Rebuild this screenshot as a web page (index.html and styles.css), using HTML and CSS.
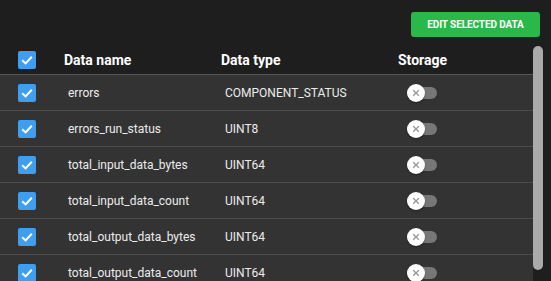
FILE: index.html
```html
<!DOCTYPE html>
<html>
<head>
<meta charset="utf-8">
<link rel="stylesheet" href="styles.css">
</head>
<body>
<div class="app">
  <div class="toolbar"><button class="btn">EDIT SELECTED DATA</button></div>
  <div class="scroller">
    <div class="table">
      <div class="row head">
        <div class="c-check"><span class="cb"><svg viewBox="0 0 18 18"><path d="M4.2 9.2 L7.6 12.4 L13.8 5.8" /></svg></span></div>
        <div class="c-name">Data name</div>
        <div class="c-type">Data type</div>
        <div class="c-store">Storage</div>
      </div>
      <div class="row">
        <div class="c-check"><span class="cb"><svg viewBox="0 0 18 18"><path d="M4.2 9.2 L7.6 12.4 L13.8 5.8" /></svg></span></div>
        <div class="c-name">errors</div>
        <div class="c-type">COMPONENT_STATUS</div>
        <div class="c-store"><span class="tg"><span class="knob"><svg viewBox="0 0 18 18"><path d="M6.2 6.2 L11.8 11.8 M11.8 6.2 L6.2 11.8" /></svg></span></span></div>
      </div>
      <div class="row">
        <div class="c-check"><span class="cb"><svg viewBox="0 0 18 18"><path d="M4.2 9.2 L7.6 12.4 L13.8 5.8" /></svg></span></div>
        <div class="c-name">errors_run_status</div>
        <div class="c-type">UINT8</div>
        <div class="c-store"><span class="tg"><span class="knob"><svg viewBox="0 0 18 18"><path d="M6.2 6.2 L11.8 11.8 M11.8 6.2 L6.2 11.8" /></svg></span></span></div>
      </div>
      <div class="row">
        <div class="c-check"><span class="cb"><svg viewBox="0 0 18 18"><path d="M4.2 9.2 L7.6 12.4 L13.8 5.8" /></svg></span></div>
        <div class="c-name">total_input_data_bytes</div>
        <div class="c-type">UINT64</div>
        <div class="c-store"><span class="tg"><span class="knob"><svg viewBox="0 0 18 18"><path d="M6.2 6.2 L11.8 11.8 M11.8 6.2 L6.2 11.8" /></svg></span></span></div>
      </div>
      <div class="row">
        <div class="c-check"><span class="cb"><svg viewBox="0 0 18 18"><path d="M4.2 9.2 L7.6 12.4 L13.8 5.8" /></svg></span></div>
        <div class="c-name">total_input_data_count</div>
        <div class="c-type">UINT64</div>
        <div class="c-store"><span class="tg"><span class="knob"><svg viewBox="0 0 18 18"><path d="M6.2 6.2 L11.8 11.8 M11.8 6.2 L6.2 11.8" /></svg></span></span></div>
      </div>
      <div class="row">
        <div class="c-check"><span class="cb"><svg viewBox="0 0 18 18"><path d="M4.2 9.2 L7.6 12.4 L13.8 5.8" /></svg></span></div>
        <div class="c-name">total_output_data_bytes</div>
        <div class="c-type">UINT64</div>
        <div class="c-store"><span class="tg"><span class="knob"><svg viewBox="0 0 18 18"><path d="M6.2 6.2 L11.8 11.8 M11.8 6.2 L6.2 11.8" /></svg></span></span></div>
      </div>
      <div class="row">
        <div class="c-check"><span class="cb"><svg viewBox="0 0 18 18"><path d="M4.2 9.2 L7.6 12.4 L13.8 5.8" /></svg></span></div>
        <div class="c-name">total_output_data_count</div>
        <div class="c-type">UINT64</div>
        <div class="c-store"><span class="tg"><span class="knob"><svg viewBox="0 0 18 18"><path d="M6.2 6.2 L11.8 11.8 M11.8 6.2 L6.2 11.8" /></svg></span></span></div>
      </div>
    </div>
    <div class="scrollbar"><div class="thumb"></div></div>
  </div>
</div>
</body>
</html>
```

FILE: styles.css
```css
html, body {
  margin: 0;
  padding: 0;
  background: #1e1e1e;
}
body {
  font-family: Roboto, "Liberation Sans", sans-serif;
  color: #ececec;
}
.app {
  height: 281px;
  overflow: hidden;
  display: flex;
  flex-direction: column;
}
.toolbar {
  display: flex;
  justify-content: flex-end;
  padding: 12px 11px 9px 0;
}
.btn {
  width: 129px;
  height: 25px;
  border: none;
  border-radius: 3px;
  background: #2ab84b;
  color: #ffffff;
  font-family: Roboto, "Liberation Sans", sans-serif;
  font-weight: 700;
  font-size: 10px;
  letter-spacing: -0.1px;
  padding: 0;
}
.scroller {
  display: flex;
  flex: 1;
  min-height: 0;
}
.table {
  flex: 1;
  display: flex;
  flex-direction: column;
}
.row {
  display: grid;
  grid-template-columns: 65px 157px 176px 1fr;
  align-items: center;
  height: 35px;
  border-bottom: 1px solid #4c4c4c;
  background: #333333;
  font-size: 12px;
  flex-shrink: 0;
}
.row.head {
  height: 28px;
  background: #1e1e1e;
  border-bottom: 1px solid #555555;
  font-size: 14px;
  font-weight: 700;
  color: #ffffff;
}
.c-check {
  padding-left: 18px;
  display: flex;
}
.row.head .c-name {
  margin-left: -1px;
}
.row.head .c-type {
  margin-left: -1px;
}
.row:not(.head) .c-name,
.row:not(.head) .c-type {
  padding-left: 3px;
}
.cb {
  width: 18px;
  height: 18px;
  border-radius: 2px;
  background: #3f9ef0;
  display: block;
}
.cb svg {
  width: 18px;
  height: 18px;
  display: block;
  fill: none;
  stroke: #ffffff;
  stroke-width: 2;
}
.c-store {
  display: flex;
}
.tg {
  margin-left: 9px;
  width: 30px;
  height: 12px;
  border-radius: 6px;
  background: #777777;
  display: flex;
  align-items: center;
}
.knob {
  width: 18px;
  height: 18px;
  border-radius: 50%;
  background: #ffffff;
  display: block;
  box-shadow: 0 1px 2px rgba(0,0,0,0.4);
}
.knob svg {
  width: 18px;
  height: 18px;
  display: block;
  fill: none;
  stroke: #9a9a9a;
  stroke-width: 1.4;
}
.scrollbar {
  width: 10px;
  margin-right: 8px;
}
.thumb {
  height: 224px;
  border-radius: 5px;
  background: #aaaaaa;
}
```
